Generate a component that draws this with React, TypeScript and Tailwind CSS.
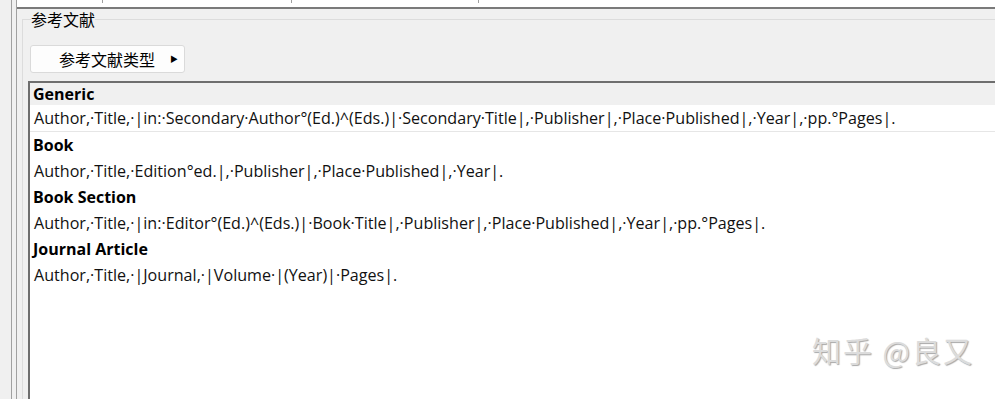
const rows = [
  {
    type: "Generic",
    format:
      "Author,·Title,·|in:·Secondary·Author°(Ed.)^(Eds.)|·Secondary·Title|,·Publisher|,·Place·Published|,·Year|,·pp.°Pages|.",
  },
  {
    type: "Book",
    format: "Author,·Title,·Edition°ed.|,·Publisher|,·Place·Published|,·Year|.",
  },
  {
    type: "Book Section",
    format:
      "Author,·Title,·|in:·Editor°(Ed.)^(Eds.)|·Book·Title|,·Publisher|,·Place·Published|,·Year|,·pp.°Pages|.",
  },
  {
    type: "Journal Article",
    format: "Author,·Title,·|Journal,·|Volume·|(Year)|·Pages|.",
  },
];

const ui = { fontFamily: '"Open Sans", "Noto Sans", "Noto Sans CJK SC", sans-serif' };
const cjk = { fontFamily: '"Noto Sans CJK SC", "Noto Sans", sans-serif' };

export default function App() {
  return (
    <div className="relative w-[995px] h-[399px] overflow-hidden bg-[#f0f0f0] flex" style={ui}>
      {/* left splitter */}
      <div className="w-[11px] shrink-0" />
      <div className="w-[5px] shrink-0 border-l border-[#a0a0a0]" />

      <div className="flex-1 flex flex-col border-l border-[#a0a0a0] min-w-0">
        {/* top strip with column ticks */}
        <div className="h-[7px] shrink-0 bg-white flex">
          <div className="w-[85px]" />
          <div className="w-px h-[3px] bg-[#a0a0a0]" />
          <div className="w-[188px]" />
          <div className="w-px h-[3px] bg-[#a0a0a0]" />
          <div className="w-[186px]" />
          <div className="w-px h-[3px] bg-[#a0a0a0]" />
        </div>
        <div className="h-[2px] shrink-0 bg-[#7a7a7a]" />

        {/* group box */}
        <fieldset className="ml-[5px] mt-[1px] flex-1 border border-r-0 border-b-0 border-[#dcdcdc] flex flex-col min-h-0">
          <legend className="ml-[8px] px-0 text-[16px] leading-[18px] text-black" style={cjk}>
            参考文献
          </legend>

          <div className="pl-[7px] pt-[17px]">
            <button className="w-[155px] h-[28px] rounded-[3px] border border-[#dadada] bg-[#fdfdfd] flex items-center">
              <span className="ml-[28px] text-[16px] leading-none text-black" style={cjk}>
                参考文献类型
              </span>
              <span className="ml-[15px] text-[8px] leading-none text-black">▶</span>
            </button>
          </div>

          {/* list box */}
          <div className="mt-[8px] ml-[5px] flex-1 bg-white border-t-2 border-l-2 border-[#6e6e6e]">
            {rows.map((r, i) => (
              <div key={r.type}>
                <div
                  className={`${
                    i === 0 ? "h-[22px] bg-[#f0f0f0]" : "h-[26px]"
                  } pl-[3px] flex items-center text-[16px] font-bold text-black whitespace-nowrap`}
                >
                  {r.type}
                </div>
                <div
                  className={`${
                    i === 0 ? "h-[27px] border-b border-[#e6e6e6]" : "h-[26px]"
                  } pl-[4px] flex items-center text-[16.1px] text-[#111] whitespace-nowrap`}
                >
                  {r.format}
                </div>
              </div>
            ))}
          </div>
        </fieldset>
      </div>

      {/* watermark */}
      <div
        className="absolute left-[812px] top-[336px] text-[29px] leading-none text-[#dcdcdc] tracking-[2px]"
        style={{ ...cjk, textShadow: "1px 1px 1px #a8a8a8" }}
      >
        知乎 @良又
      </div>
    </div>
  );
}
